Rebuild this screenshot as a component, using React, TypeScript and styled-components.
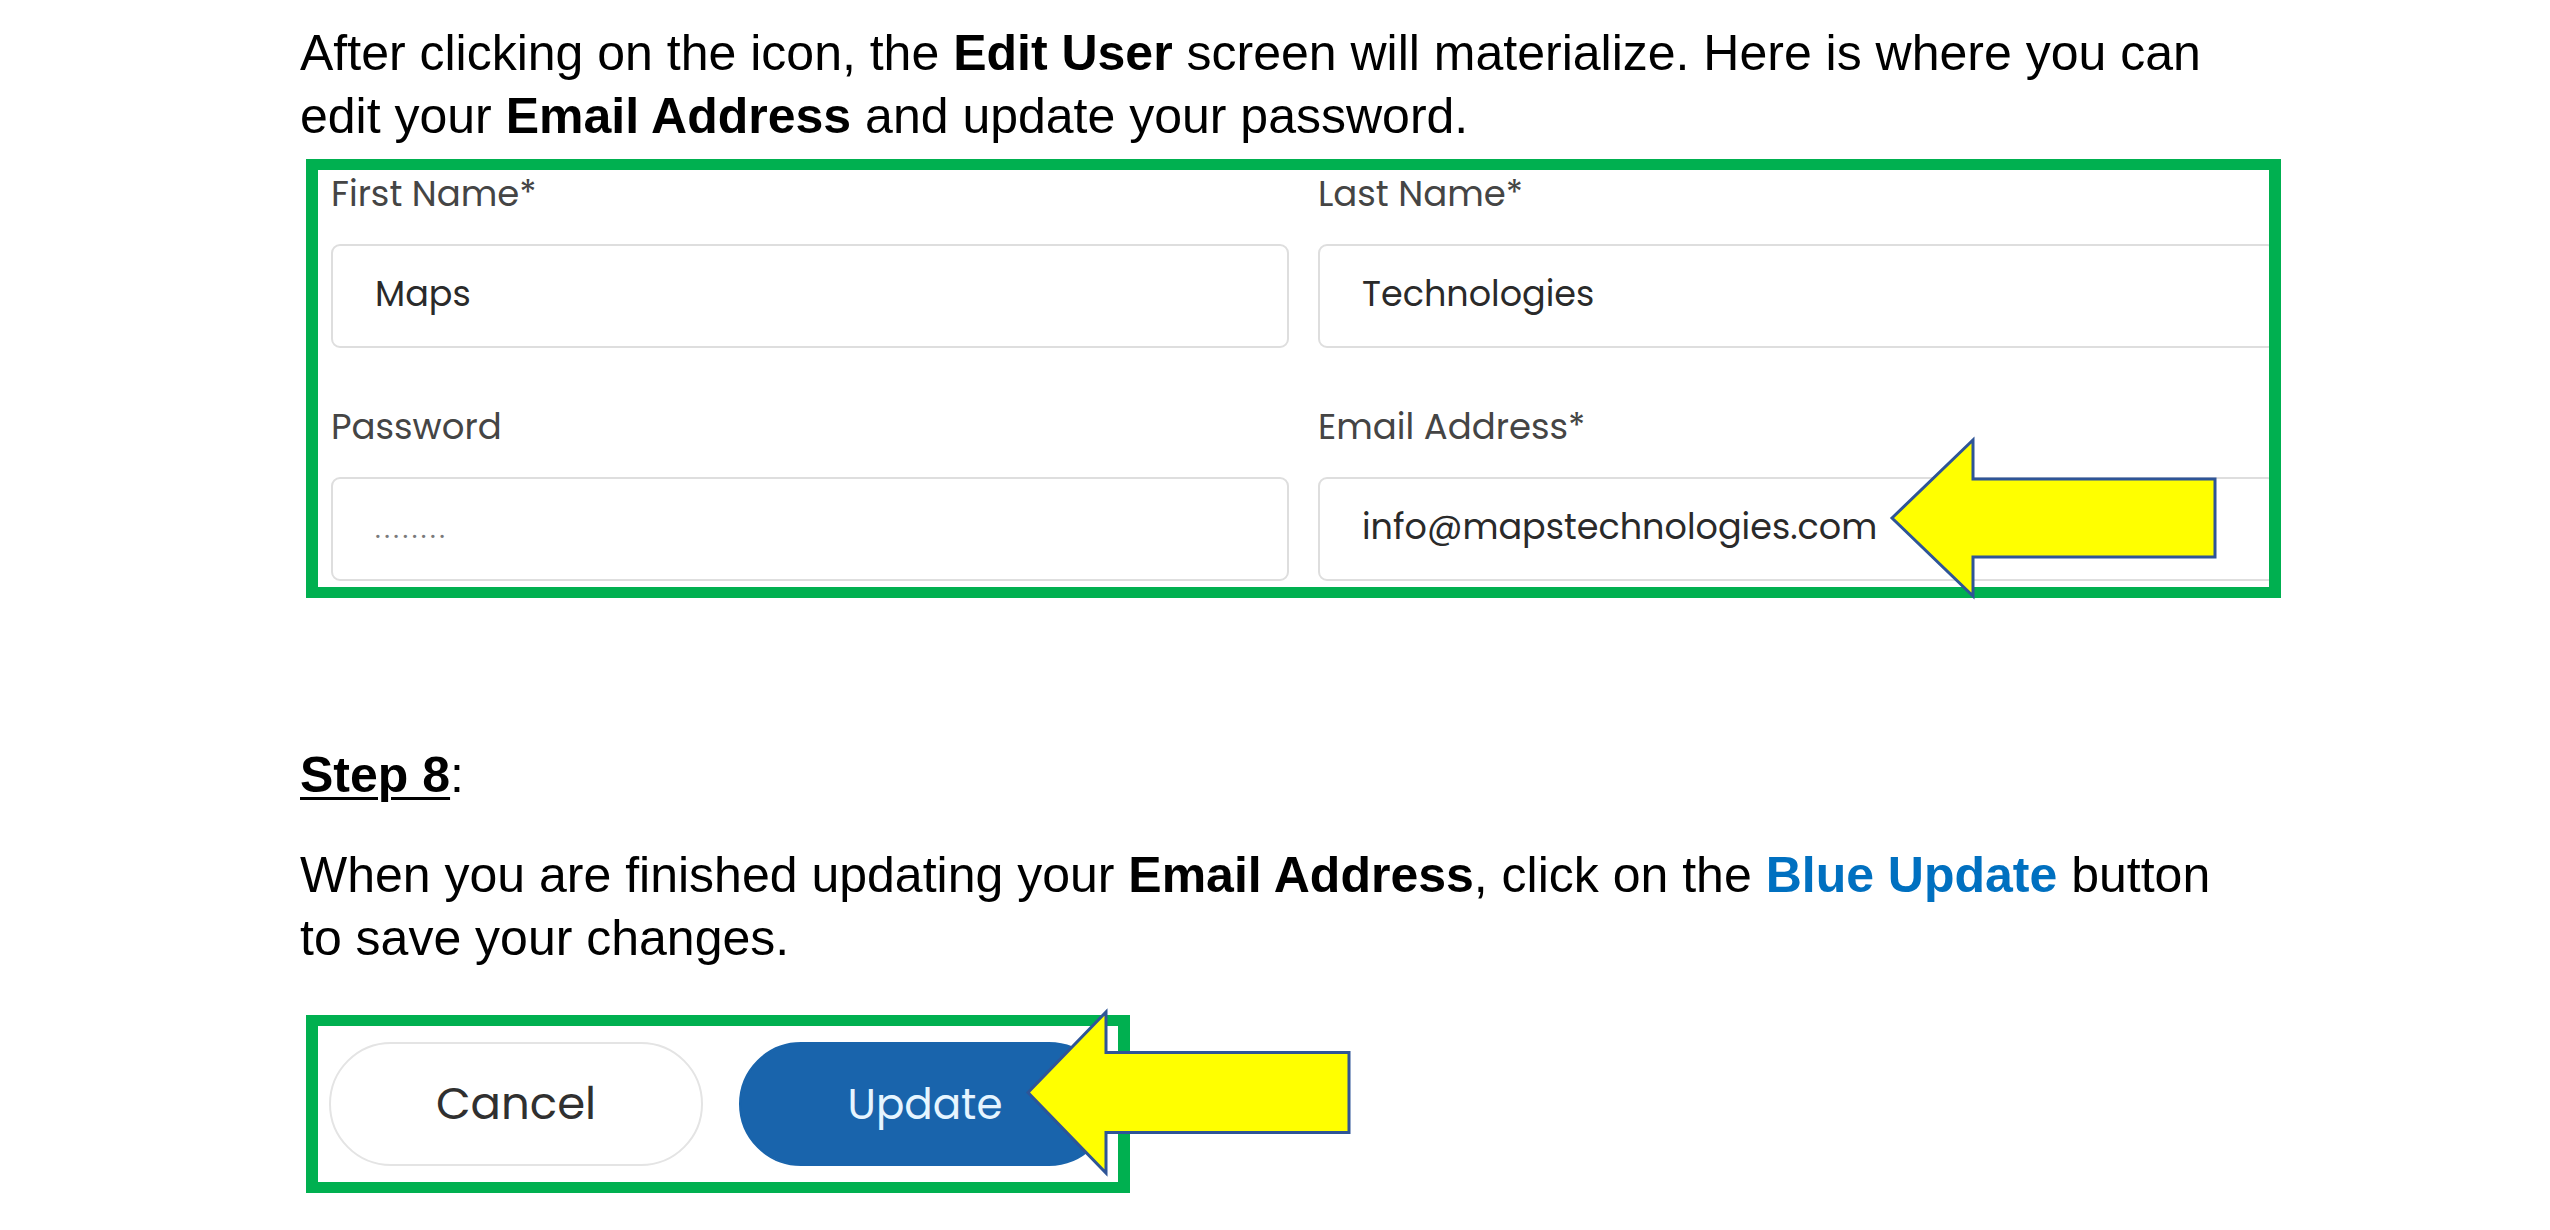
import React from "react";
import styled, { createGlobalStyle } from "styled-components";

const Global = createGlobalStyle`
  html, body { margin: 0; padding: 0; background: #ffffff; }
  body { font-family: "Liberation Sans", Arial, sans-serif; color: #000; }
`;

const Page = styled.main`
  width: 2550px;
  height: 1230px;
  box-sizing: border-box;
  padding: 22px 0 0 300px;
  display: flex;
  flex-direction: column;
  align-items: flex-start;
  overflow: hidden;
  background: #fff;
`;

const Paragraph = styled.p<{ $mt?: number }>`
  margin: ${(p) => p.$mt ?? 0}px 0 0 0;
  font-family: "Liberation Sans", Arial, sans-serif;
  font-size: 50px;
  line-height: 63px;
  color: #000;
  white-space: nowrap;
`;

const Strong = styled.strong<{ $blue?: boolean }>`
  font-weight: 700;
  color: ${(p) => (p.$blue ? "#0070c0" : "#000")};
`;

const StepTitle = styled.span`
  font-weight: 700;
  text-decoration: underline;
  text-decoration-thickness: 3px;
  text-underline-offset: 5px;
`;

const HighlightBox = styled.section<{ $mt: number; $w: number; $h: number }>`
  position: relative;
  margin: ${(p) => p.$mt}px 0 0 6px;
  width: ${(p) => p.$w}px;
  height: ${(p) => p.$h}px;
  border-style: solid;
  border-color: #00b050;
  border-width: 11px 12px 11px 12px;
  background: #fff;
`;

const FormClip = styled.div`
  width: 100%;
  height: 100%;
  box-sizing: border-box;
  overflow: hidden;
  padding: 4px 0 0 13px;
  display: grid;
  grid-template-columns: 958px 958px;
  column-gap: 29px;
  row-gap: 59px;
  align-content: start;
`;

const Field = styled.div`
  display: flex;
  flex-direction: column;
  gap: 30px;
`;

const Label = styled.label`
  font-family: "Poppins", "DejaVu Sans", sans-serif;
  font-size: 35.5px;
  line-height: 40px;
  color: #454545;
  white-space: nowrap;
`;

const Input = styled.div<{ $muted?: boolean }>`
  box-sizing: border-box;
  height: 104px;
  border: 2px solid #dedede;
  border-radius: 9px;
  padding: ${(p) => (p.$muted ? "30px" : "28px")} 0 0 42px;
  font-family: "Poppins", "DejaVu Sans", sans-serif;
  font-size: ${(p) => (p.$muted ? "27px" : "35px")};
  letter-spacing: ${(p) => (p.$muted ? "3.5px" : "0")};
  line-height: 40px;
  color: ${(p) => (p.$muted ? "#7a7a7a" : "#2a2a2a")};
  white-space: nowrap;
  background: #fff;
`;

const ButtonRow = styled.div`
  box-sizing: border-box;
  width: 100%;
  height: 100%;
  padding: 16px 0 0 11px;
  display: flex;
  gap: 36px;
  align-items: flex-start;
`;

const PillButton = styled.button<{ $primary?: boolean }>`
  box-sizing: border-box;
  width: ${(p) => (p.$primary ? 372 : 374)}px;
  height: 124px;
  border-radius: 62px;
  border: 2px solid ${(p) => (p.$primary ? "#1964ac" : "#e4e4e4")};
  background: ${(p) => (p.$primary ? "#1964ac" : "#ffffff")};
  color: ${(p) => (p.$primary ? "#e6f5ff" : "#303030")};
  font-family: "Poppins", "DejaVu Sans", sans-serif;
  font-size: ${(p) => (p.$primary ? 42 : 45)}px;
  display: flex;
  align-items: center;
  justify-content: center;
  padding: 0;
  cursor: pointer;
`;

const ArrowSvg = styled.svg<{ $left: number; $top: number }>`
  position: absolute;
  left: ${(p) => p.$left}px;
  top: ${(p) => p.$top}px;
  overflow: visible;
  pointer-events: none;
`;

type ArrowProps = {
  left: number;
  top: number;
  w: number;
  h: number;
  headW: number;
  shaftH: number;
};

function LeftArrow({ left, top, w, h, headW, shaftH }: ArrowProps) {
  const p = 2;
  const sTop = (h - shaftH) / 2;
  const sBot = (h + shaftH) / 2;
  const pts = [
    [p, h / 2],
    [p + headW, p],
    [p + headW, sTop],
    [w - p, sTop],
    [w - p, sBot],
    [p + headW, sBot],
    [p + headW, h - p],
  ]
    .map((q) => q.join(","))
    .join(" ");
  return (
    <ArrowSvg $left={left} $top={top} width={w} height={h} viewBox={`0 0 ${w} ${h}`}>
      <polygon points={pts} fill="#ffff00" stroke="#2f5597" strokeWidth={3} strokeLinejoin="miter" />
    </ArrowSvg>
  );
}

export default function App() {
  return (
    <>
      <Global />
      <Page>
        <Paragraph>
          After clicking on the icon, the <Strong>Edit User</Strong> screen will materialize. Here is where you can
          <br />
          edit your <Strong>Email Address</Strong> and update your password.
        </Paragraph>

        <HighlightBox $mt={11} $w={1951} $h={417}>
          <FormClip>
            <Field>
              <Label>First Name*</Label>
              <Input>Maps</Input>
            </Field>
            <Field>
              <Label>Last Name*</Label>
              <Input>Technologies</Input>
            </Field>
            <Field>
              <Label>Password</Label>
              <Input $muted>........</Input>
            </Field>
            <Field>
              <Label>Email Address*</Label>
              <Input>info@mapstechnologies.com</Input>
            </Field>
          </FormClip>
          <LeftArrow left={1572} top={268} w={327} h={160} headW={81} shaftH={78} />
        </HighlightBox>

        <Paragraph $mt={146}>
          <StepTitle>Step 8</StepTitle>:
        </Paragraph>

        <Paragraph $mt={37}>
          When you are finished updating your <Strong>Email Address</Strong>, click on the{" "}
          <Strong $blue>Blue Update</Strong> button
          <br />
          to save your changes.
        </Paragraph>

        <HighlightBox $mt={45} $w={800} $h={156}>
          <ButtonRow>
            <PillButton type="button">Cancel</PillButton>
            <PillButton type="button" $primary>
              Update
            </PillButton>
          </ButtonRow>
          <LeftArrow left={708} top={-16} w={325} h={165} headW={78} shaftH={80} />
        </HighlightBox>
      </Page>
    </>
  );
}
